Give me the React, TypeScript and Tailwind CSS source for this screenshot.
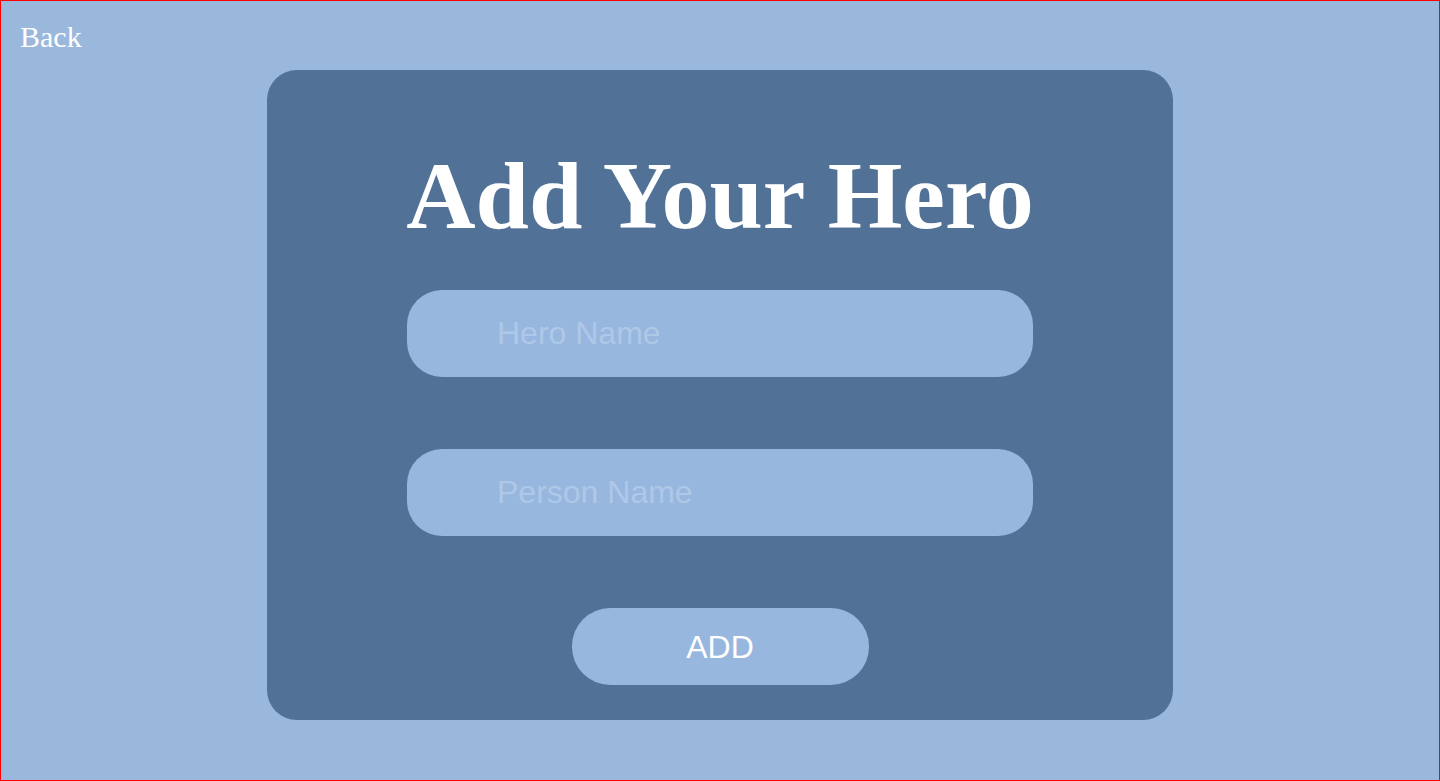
export default function App() {
  return (
    <div className="h-[781px] border border-[#ff0000] bg-[#9ab8dc] font-['Liberation_Sans',Arial,sans-serif]">
      <div className="pl-[19px] pt-[19px]">
        <a href="#" className="font-['Liberation_Serif','Times_New_Roman',serif] text-[30px] leading-[34px] text-white">
          Back
        </a>
      </div>

      <div className="mx-auto mt-[16px] flex h-[650px] w-[906px] flex-col items-center rounded-[30px] bg-[#527196]">
        <h1 className="pt-[78px] font-['Liberation_Serif','Times_New_Roman',serif] text-[96px] font-bold leading-[96px] text-white">
          Add Your Hero
        </h1>

        <input
          type="text"
          placeholder="Hero Name"
          className="mt-[46px] h-[87px] w-[626px] rounded-[35px] bg-[#98b7de] pl-[90px] text-[32px] text-white outline-none placeholder:text-[#afc8e7]"
        />
        <input
          type="text"
          placeholder="Person Name"
          className="mt-[72px] h-[87px] w-[626px] rounded-[35px] bg-[#98b7de] pl-[90px] text-[32px] text-white outline-none placeholder:text-[#afc8e7]"
        />

        <button className="mt-[72px] h-[77px] w-[297px] rounded-[38px] bg-[#98b7de] text-[32px] text-white">
          ADD
        </button>
      </div>
    </div>
  );
}
